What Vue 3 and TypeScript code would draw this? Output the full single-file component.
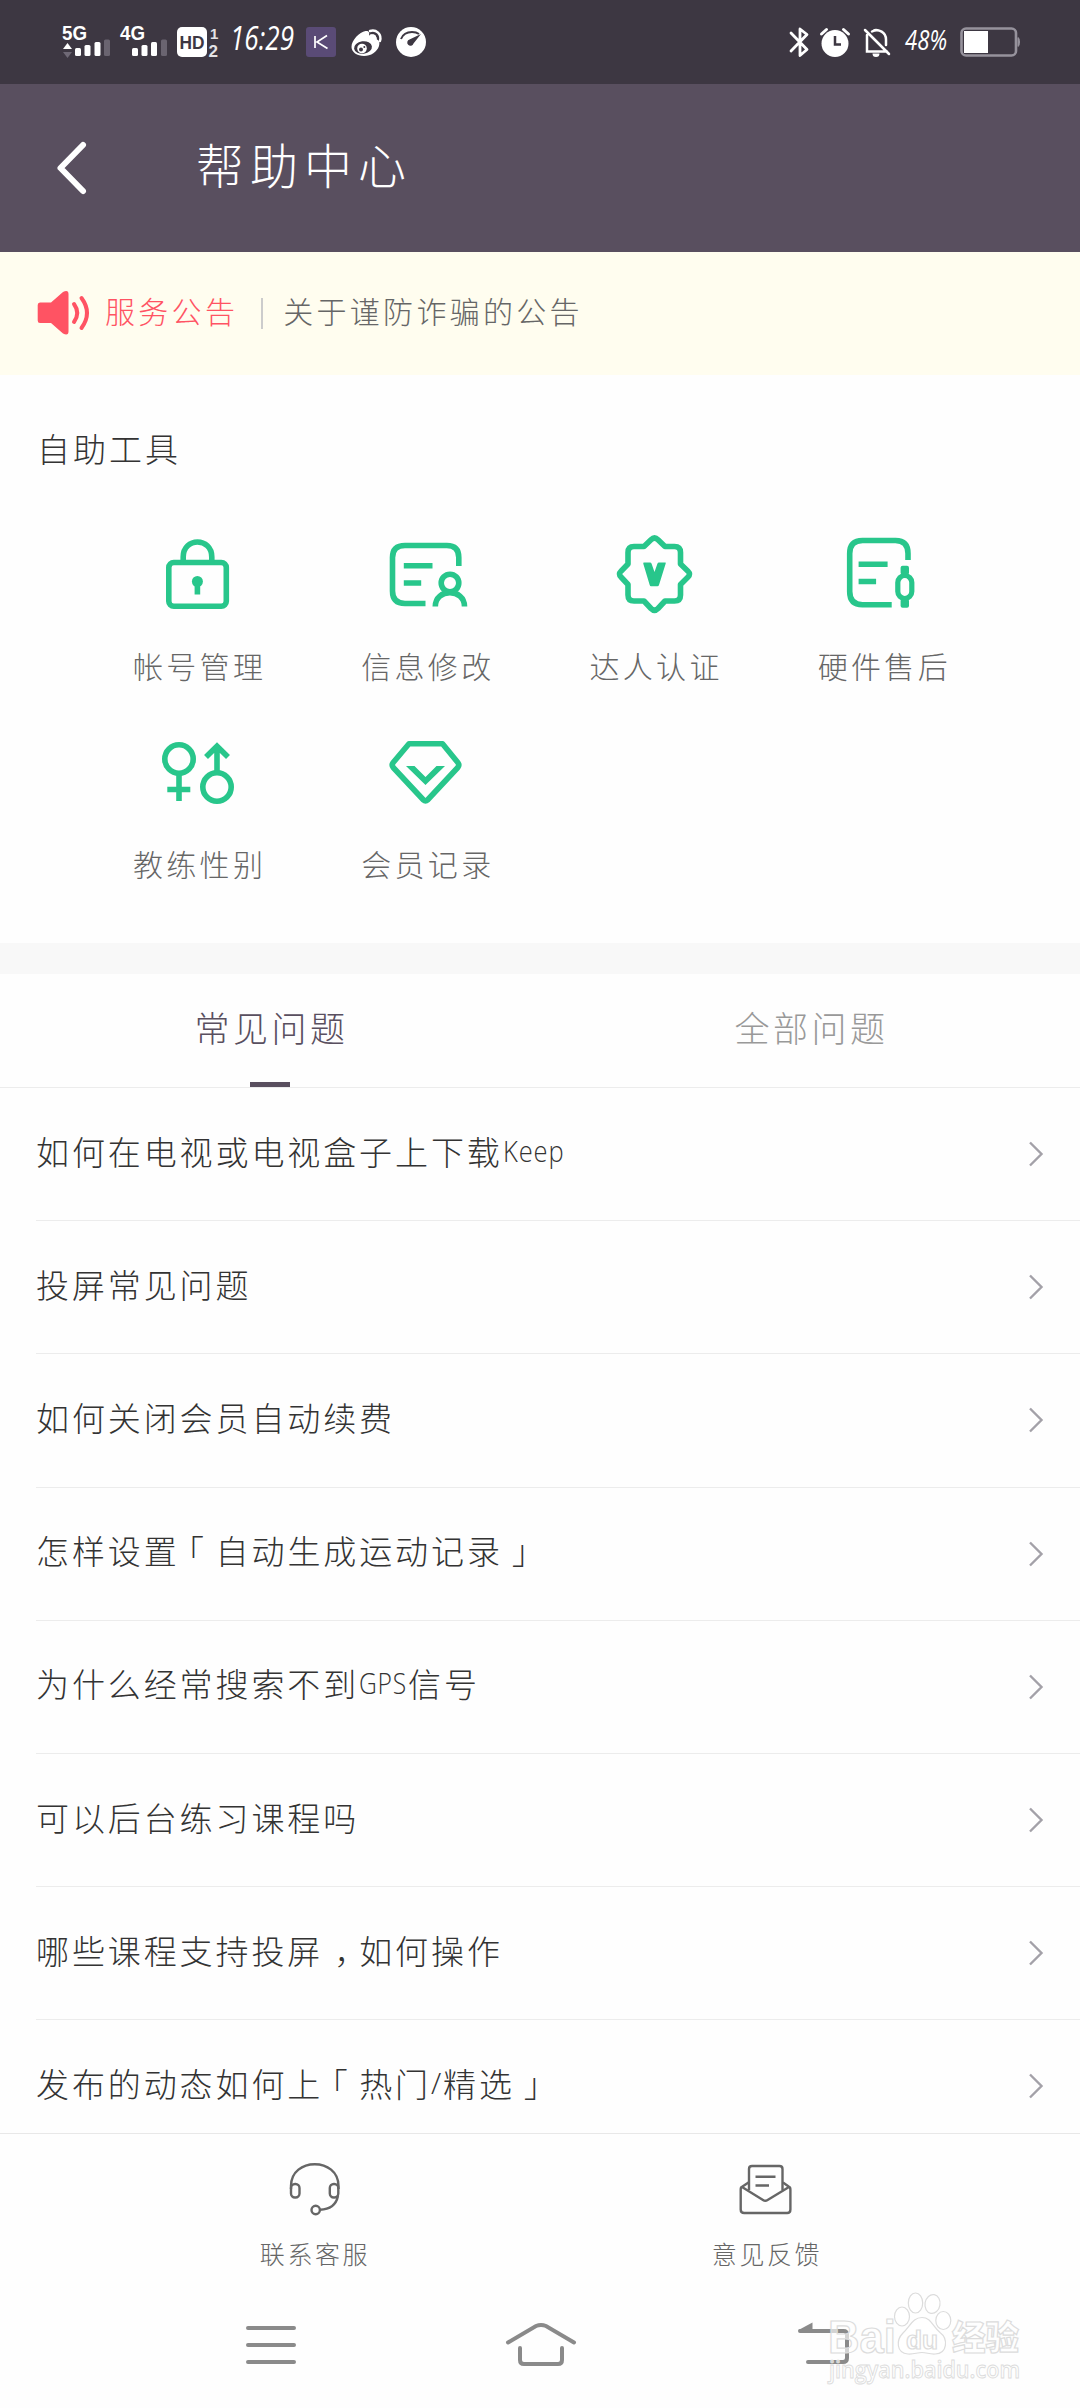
<script setup lang="ts">
interface Tool {
  name: string
  icon: string
  viewBox: string
}
interface Piece {
  text: string
  kind: 'cjk' | 'latin' | 'open' | 'close' | 'comma'
  box?: number
  scale?: number
}

const tools: Tool[] = [
  { name: '帐号管理', icon: 'lock', viewBox: '150 526 96 96' },
  { name: '信息修改', icon: 'info', viewBox: '378.5 526 96 96' },
  { name: '达人认证', icon: 'badge', viewBox: '606.5 526 96 96' },
  { name: '硬件售后', icon: 'device', viewBox: '835 526 96 96' },
  { name: '教练性别', icon: 'gender', viewBox: '150 724 96 96' },
  { name: '会员记录', icon: 'member', viewBox: '378.5 724 96 96' },
]

const tabs = ['常见问题', '全部问题']

const c = (text: string): Piece => ({ text, kind: 'cjk' })
const latin = (text: string, box: number, scale: number): Piece => ({ text, kind: 'latin', box, scale })
const open: Piece = { text: '「', kind: 'open' }
const close: Piece = { text: '」', kind: 'close' }
const comma: Piece = { text: '，', kind: 'comma' }

const questions: Piece[][] = [
  [c('如何在电视或电视盒子上下载'), latin('Keep', 64, 0.85)],
  [c('投屏常见问题')],
  [c('如何关闭会员自动续费')],
  [c('怎样设置'), open, c('自动生成运动记录'), close],
  [c('为什么经常搜索不到'), latin('GPS', 49, 0.82), c('信号')],
  [c('可以后台练习课程吗')],
  [c('哪些课程支持投屏'), comma, c('如何操作')],
  [c('发布的动态如何上'), open, c('热门'), latin('/', 12, 1), c('精选'), close],
]
</script>

<template>
  <div class="screen">
    <div class="status">
      <div class="group">
        <svg width="48" height="84" viewBox="63 0 48 84">
          <text x="62" y="40" class="net" textLength="25" lengthAdjust="spacingAndGlyphs">5G</text>
          <path d="M67.500 43l4.500 6h-9z" fill="#fff" />
          <path d="M63 52h9l-4.500 6z" fill="#6f6976" />
          <rect x="75" y="48" width="6" height="8" rx="1.500" fill="#fff" />
          <rect x="84.500" y="45" width="6" height="11" rx="1.500" fill="#fff" />
          <rect x="94.500" y="42" width="6" height="14" rx="1.500" fill="#fff" />
          <rect x="104" y="39.500" width="6" height="16.500" rx="1.500" fill="#6a6470" />
        </svg>
        <svg class="sim2" width="48" height="84" viewBox="120 0 48 84">
          <text x="120" y="40" class="net" textLength="25" lengthAdjust="spacingAndGlyphs">4G</text>
          <rect x="132" y="48" width="6" height="8" rx="1.500" fill="#fff" />
          <rect x="141.500" y="45" width="6" height="11" rx="1.500" fill="#fff" />
          <rect x="151" y="42" width="6" height="14" rx="1.500" fill="#fff" />
          <rect x="161" y="39.500" width="6" height="16.500" rx="1.500" fill="#6a6470" />
        </svg>
        <svg class="hd" width="43" height="84" viewBox="177 0 43 84">
          <rect x="177" y="27" width="30" height="30" rx="5" fill="#fff" />
          <text x="179.500" y="49" class="hdt" textLength="25" lengthAdjust="spacingAndGlyphs">HD</text>
          <text x="210" y="39" class="num">1</text>
          <text x="208.500" y="56.500" class="num big">2</text>
        </svg>
        <svg class="clock" width="66" height="84" viewBox="230 0 66 84">
          <text x="230" y="50" class="hand" font-size="33" textLength="64" lengthAdjust="spacingAndGlyphs">16:29</text>
        </svg>
        <svg class="keep" width="30" height="84" viewBox="306 0 30 84">
          <rect x="306" y="27" width="30" height="30" rx="3" fill="#5a4b76" />
          <path d="M315 36v12M327 35.500l-10 6.500 10.500 6.500" fill="none" stroke="#fff" stroke-width="1.700" />
        </svg>
        <svg class="weibo" width="31" height="84" viewBox="351 0 31 84">
          <path d="M351.500 47c0-7 8-15 14-16 4-.5 4 2 3.500 4.500 4-2 8-1 7 3.500 3 1 4 3 3 7-2 6-8 10-15 10-7 0-12.500-4-12.500-9z" fill="#fff" />
          <ellipse cx="363" cy="47.500" rx="9" ry="6.300" transform="rotate(-8 363 47.500)" fill="#3d3742" />
          <circle cx="362" cy="48.500" r="4.800" fill="#fff" />
          <circle cx="361" cy="49.500" r="2" fill="#3d3742" />
          <circle cx="364.300" cy="47" r="1" fill="#3d3742" />
          <path d="M370 31c6-2 12 3 10 10M371 35.500c3-.5 5 1.500 4.500 4.500" fill="none" stroke="#fff" stroke-width="2.400" stroke-linecap="round" />
        </svg>
        <svg class="gauge" width="30" height="84" viewBox="396 0 30 84">
          <circle cx="411" cy="42" r="15" fill="#fff" />
          <path d="M401 39c2-5 6-7 11-7 3 0 5 .5 7 2" fill="none" stroke="#3d3742" stroke-width="2" />
          <path d="M421 34l-7.500 9.500a3.200 3.200 0 1 1-4-4z" fill="#3d3742" />
        </svg>
      </div>
      <div class="group">
        <svg width="20" height="84" viewBox="789 0 20 84">
          <path d="M791 33l16 16.500-7 6V29l7 5.500L791 51" fill="none" stroke="#fff" stroke-width="2.800" stroke-linejoin="round" stroke-linecap="round" />
        </svg>
        <svg class="alarm" width="30" height="84" viewBox="820 0 30 84">
          <circle cx="835" cy="43.500" r="13.500" fill="#fff" />
          <path d="M821.500 34l5-4.500M848.500 34l-5-4.500" stroke="#fff" stroke-width="3" stroke-linecap="round" />
          <path d="M835 36v8.500h6" fill="none" stroke="#3d3742" stroke-width="2.500" />
        </svg>
        <svg class="bell" width="27" height="84" viewBox="864 0 27 84">
          <path d="M867 35v16.500h20M872 31.500c7-3.500 14 1 14 8v5.500M865 30l24 24" fill="none" stroke="#fff" stroke-width="2.500" stroke-linecap="round" />
          <path d="M872.500 53.500h7a3.500 3.500 0 0 1-7 0zM873 30a3.500 2.500 0 0 1 6 0z" fill="#fff" />
        </svg>
        <svg class="pct" width="45" height="84" viewBox="904 0 45 84">
          <text x="905" y="50" class="hand" font-size="27" textLength="42" lengthAdjust="spacingAndGlyphs">48%</text>
        </svg>
        <svg class="battery" width="61" height="84" viewBox="960 0 61 84">
          <rect x="961.500" y="28.500" width="54.500" height="27" rx="4.500" fill="none" stroke="#96929c" stroke-width="2.600" />
          <rect x="964" y="31" width="24" height="22" fill="#fff" />
          <path d="M1018 37.500c2 1 2 8 0 9z" fill="#96929c" stroke="#96929c" />
        </svg>
      </div>
    </div>

    <header class="header">
      <svg width="32" height="56" viewBox="56 140 32 56">
        <path d="M83 145L60.500 168 83 191" fill="none" stroke="#fff" stroke-width="6" stroke-linecap="round" stroke-linejoin="round" />
      </svg>
      <h1>帮助中心</h1>
    </header>

    <section class="notice">
      <svg width="54" height="46" viewBox="37 290 54 46">
        <path d="M40 302.500h11l12-10.500q5.500-2.500 5.500 2v37.500q0 4.500-5.500 2l-12-10.500H40q-2.300 0-2.300-2.500V305q0-2.500 2.300-2.500z" fill="#ff5363" />
        <path d="M74 304q6.500 9 0 18M81.500 298q11 15 0 30" fill="none" stroke="#ff5363" stroke-width="4" stroke-linecap="round" />
      </svg>
      <span class="ntag">服务公告</span>
      <i></i>
      <span class="ntext">关于谨防诈骗的公告</span>
    </section>

    <section class="tools">
      <h2>自助工具</h2>
      <div class="grid">
        <div v-for="t in tools" :key="t.name" class="tool">
          <svg width="96" height="96" :viewBox="t.viewBox" fill="none" stroke="#28c68b" stroke-width="5.600">
            <g v-if="t.icon === 'lock'">
              <rect x="168.800" y="562.500" width="57.500" height="43.700" rx="5" />
              <path d="M183.200 565v-8c0-20 28.600-20 28.600 0v8" />
              <circle cx="197.400" cy="581.500" r="5.500" fill="#28c68b" stroke="none" />
              <path d="M197.400 583v11.500" />
            </g>
            <g v-else-if="t.icon === 'info'">
              <path d="M459.300 566v-8.500q0-12-12-12H405.500q-12.500 0-12.500 12V591q0 12.500 12.500 12.500H426M404.300 565.800H433M404.300 583H421.700" />
              <circle cx="450.500" cy="583" r="8.800" />
              <path d="M435.800 606.500c0-18.500 29.200-18.500 29.200 0" />
            </g>
            <g v-else-if="t.icon === 'badge'">
              <path d="M650.500 539.800q3.500-3.500 7 0L664.500 546.500H674q6 0 6 6V564l7.500 7.200q3 2.900 0 5.800L680 584.500V595q0 6-6 6H664.500l-7 7.500q-3.500 3.500-7 0L643.500 601H633.500q-6 0-6-6V584.500l-7-7.500q-3-2.900 0-5.800l7-7.200V552.500q0-6 6-6h10z" stroke-linejoin="round" />
              <path d="M643.500 562.500h6q1.200 0 1.600 1.200l2.900 8.300 2.900-8.300q.4-1.200 1.600-1.200h6.300q.8 0 .4 1L658.500 585q-.5 1.200-1.500 1.200h-6.500q-1 0-1.300-1.200L642.800 563.800q-.3-1.300.7-1.300z" fill="#28c68b" stroke="none" />
            </g>
            <g v-else-if="t.icon === 'device'">
              <path d="M908 560v-6.500q0-13-12.500-13H862.500q-12.800 0-12.800 13V591.500q0 13.300 12.800 13.300H891.700M858.600 564.300h29M858.600 581.500h17.500" />
              <rect x="897.800" y="575.500" width="14" height="23" rx="7" stroke-width="5.200" />
              <rect x="900.600" y="565.700" width="8.400" height="9" rx="2" fill="#28c68b" stroke="none" />
              <rect x="900.600" y="598.800" width="8.400" height="9" rx="2" fill="#28c68b" stroke="none" />
            </g>
            <g v-else-if="t.icon === 'gender'">
              <circle cx="179" cy="759" r="14.200" />
              <path d="M179 773v28M167.300 789.500h23" />
              <circle cx="217" cy="787" r="14.200" />
              <path d="M217 773v-27M206 757l11-10.800L228 757" />
            </g>
            <g v-else>
              <path d="M409.500 743.700h33.500L458.300 762.500q2 2.500 0 5L428 800q-2 2-4 0L393.700 767.500q-2-2.500 0-5z" stroke-linejoin="round" />
              <path d="M406.500 766h8.500l11 11 11-11h8.500l-19.500 19z" fill="#28c68b" stroke="none" />
            </g>
          </svg>
          <span>{{ t.name }}</span>
        </div>
      </div>
    </section>

    <nav class="tabs">
      <div v-for="(t, i) in tabs" :key="t" class="tab" :class="{ active: i === 0 }">
        <span>{{ t }}</span>
        <b v-if="i === 0"></b>
      </div>
    </nav>

    <ul class="list">
      <li v-for="(q, i) in questions" :key="i">
        <p>
          <template v-for="(p, j) in q" :key="j"><span v-if="p.kind === 'latin'" class="latin" :style="{ width: p.box + 'px' }"><span :style="{ transform: `scaleX(${p.scale})` }">{{ p.text }}</span></span><span v-else :class="p.kind">{{ p.text }}</span></template>
        </p>
        <svg width="16" height="28" viewBox="0 0 16 28">
          <path d="M2 2.500L13.500 14 2 25.500" fill="none" stroke="#a3a1a8" stroke-width="2.400" />
        </svg>
      </li>
    </ul>

    <footer class="footer">
      <div class="action">
        <svg width="60" height="60" viewBox="284 2159 60 60" fill="none" stroke="#666" stroke-width="2.400">
          <path d="M291 2189v-3c0-29 47.500-29 47.500 0v3M338 2196c-2 9-8 13.500-18 13.700" />
          <rect x="291" y="2184" width="8.500" height="13.500" rx="4" />
          <rect x="329.800" y="2184" width="8.500" height="13.500" rx="4" />
          <circle cx="315.700" cy="2210" r="4.200" />
        </svg>
        <span>联系客服</span>
      </div>
      <div class="action">
        <svg width="60" height="60" viewBox="736 2159 60 60" fill="none" stroke="#666" stroke-width="2.400" stroke-linejoin="round">
          <path d="M749 2190v-21q0-3 3-3h27.500q3 0 3 3v21M755.500 2176.700H775.500M755.500 2185.500h13.500" />
          <path d="M748.500 2182.500l-7.500 5q-.3 1-.3 2.500v19.500q0 3.500 3.500 3.500h43q3.200 0 3.200-3.500V2190q0-1.500-.4-2.500l-7-5M742 2187l21 13q2.300 1.500 4.600 0l21.400-13" />
        </svg>
        <span>意见反馈</span>
      </div>
    </footer>

    <div class="sysnav">
      <svg width="52" height="48" viewBox="245 2321 52 48">
        <path d="M248 2328h46M248 2345h46M248 2362h46" stroke="#8a8a8a" stroke-width="4" stroke-linecap="round" />
      </svg>
      <svg class="home" width="74" height="48" viewBox="504 2321 74 48">
        <path d="M508 2342.500l28-16.500q5-2 10 0l28 16.500M520 2348v12q0 4 4 4h34q4 0 4-4v-12" fill="none" stroke="#8a8a8a" stroke-width="4" stroke-linecap="round" />
      </svg>
      <svg class="back" width="54" height="48" viewBox="797 2321 54 48">
        <path d="M800 2331h43.500q3.500 0 3.500 3.500V2358q0 4-4 4H808" fill="none" stroke="#8a8a8a" stroke-width="4" stroke-linecap="round" />
        <path d="M798.500 2330l14-7.500v9h-13z" fill="#8a8a8a" />
      </svg>
      <svg class="mark" width="250" height="108" viewBox="820 2286 250 108" fill="#fff" fill-opacity=".65" stroke="#dcdcdc" stroke-width="1.200">
        <ellipse cx="902" cy="2316.500" rx="7.500" ry="9.500" />
        <ellipse cx="915.500" cy="2303" rx="7.200" ry="10" />
        <ellipse cx="932.500" cy="2304" rx="7.500" ry="9.500" transform="rotate(10 932.500 2304)" />
        <ellipse cx="943.300" cy="2320.500" rx="7.500" ry="9" />
        <path d="M922 2317.500c9 0 10 8 18 15 8 6 8 21-5 21.500-6 .3-8-1.500-13-1.500s-8 2-14 1.500c-12-1-12-14-5-21 8-8 10-15.500 19-15.500z" />
        <text x="828" y="2353" class="bd" font-size="46" textLength="68" lengthAdjust="spacingAndGlyphs">Bai</text>
        <text x="906" y="2349" class="bd" font-size="25" textLength="32" lengthAdjust="spacingAndGlyphs">du</text>
        <text x="952" y="2350" class="bd cn" font-size="34" textLength="67" lengthAdjust="spacingAndGlyphs">经验</text>
        <text x="829" y="2378" class="bd url" font-size="23" textLength="191" lengthAdjust="spacingAndGlyphs">jingyan.baidu.com</text>
      </svg>
    </div>
  </div>
</template>

<style>
body {
  background: #fefefe;
}
</style>

<style scoped>
.screen {
  width: 1080px;
  height: 2408px;
  overflow: hidden;
  display: flex;
  flex-direction: column;
  background: #fefefe;
  color: #333;
  font-family: "Noto Sans CJK SC", "Liberation Sans", sans-serif;
  font-weight: 300;
  white-space: nowrap;
}
svg {
  display: block;
  flex: none;
  overflow: visible;
}
h1, h2, p, ul {
  margin: 0;
  padding: 0;
  font-weight: 300;
}
.status {
  height: 84px;
  flex: none;
  background: #3d3742;
  display: flex;
  justify-content: space-between;
  padding: 0 59px 0 63px;
}
.group {
  display: flex;
}
.sim2, .hd {
  margin-left: 9px;
}
.clock, .keep {
  margin-left: 10px;
}
.weibo {
  margin-left: 15px;
}
.gauge {
  margin-left: 14px;
}
.alarm {
  margin-left: 11px;
}
.bell {
  margin-left: 14px;
}
.pct {
  margin-left: 13px;
}
.battery {
  margin-left: 11px;
}
.net {
  font: bold 21px "Liberation Sans", sans-serif;
  fill: #fff;
}
.hdt {
  font: bold 19px "Liberation Sans", sans-serif;
  fill: #3d3742;
}
.num {
  font: bold 15px "Liberation Sans", sans-serif;
  fill: #e4e3e6;
}
.num.big {
  font-size: 17px;
}
.hand {
  font-family: "Open Sans", sans-serif;
  font-weight: 400;
  font-style: italic;
  fill: #fff;
}
.header {
  height: 168px;
  flex: none;
  background: #594f5f;
  display: flex;
  align-items: center;
  padding-left: 56px;
}
.header h1 {
  margin-left: 108px;
  padding-bottom: 10px;
  font-size: 48px;
  line-height: 60px;
  letter-spacing: 6px;
  color: #fff;
}
.notice {
  height: 123px;
  flex: none;
  background: #fffdef;
  display: flex;
  align-items: center;
  padding-left: 37px;
}
.notice svg {
  margin-bottom: 2px;
}
.notice span {
  font-size: 30px;
  line-height: 40px;
  letter-spacing: 3.300px;
  padding-bottom: 8px;
}
.ntag {
  margin-left: 14px;
  color: #ff5363;
}
.notice i {
  width: 2px;
  height: 31px;
  background: #ccc;
  margin: 0 20px 0 23px;
}
.ntext {
  color: #666;
}
.tools {
  height: 568px;
  flex: none;
  border-bottom: 31px solid #f8f8f8;
}
.tools h2 {
  padding: 51px 0 0 37px;
  font-size: 33px;
  line-height: 44px;
  letter-spacing: 3px;
}
.grid {
  margin: 56px 83px 0 84px;
  display: grid;
  grid-template-columns: repeat(4, 1fr);
  grid-auto-rows: 198px;
}
.tool {
  display: flex;
  flex-direction: column;
  align-items: center;
}
.tool span {
  margin-top: 22px;
  padding-left: 3px;
  font-size: 30px;
  line-height: 42px;
  letter-spacing: 3.300px;
  color: #666;
}
.tabs {
  height: 113px;
  flex: none;
  display: flex;
  border-bottom: 1px solid #ececec;
}
.tab {
  flex: 1;
  display: flex;
  flex-direction: column;
  align-items: center;
  justify-content: space-between;
  color: #999;
}
.tab span {
  padding: 28px 0 0 3px;
  font-size: 35px;
  line-height: 50px;
  letter-spacing: 3.500px;
}
.tab.active {
  color: #594f5f;
}
.tab b {
  width: 40px;
  height: 5px;
  background: #594f5f;
}
.list {
  height: 1045px;
  flex: none;
  overflow: hidden;
  list-style: none;
}
.list li {
  height: 133.200px;
  box-sizing: border-box;
  margin-left: 36px;
  padding-right: 36px;
  border-bottom: 1px solid #ececec;
  display: flex;
  align-items: center;
  justify-content: space-between;
}
.list p {
  display: flex;
  padding-bottom: 7px;
  font-size: 33px;
  line-height: 48px;
  letter-spacing: 2.900px;
}
.latin {
  font-family: "Open Sans", "Liberation Sans", sans-serif;
  font-size: 30px;
  letter-spacing: 1px;
}
.latin span {
  display: inline-block;
  transform-origin: left;
}
.open, .close, .comma {
  width: 36px;
  box-sizing: border-box;
  font-feature-settings: "halt";
}
.open {
  padding-left: 8px;
}
.close {
  padding-left: 9px;
}
.comma {
  padding-left: 11px;
}
.footer {
  height: 152px;
  flex: none;
  border-top: 1px solid #e8e8e8;
  display: grid;
  grid-template-columns: 452px 452px;
  justify-content: center;
}
.action {
  display: flex;
  flex-direction: column;
  align-items: center;
  padding-top: 25px;
}
.action span {
  margin-top: 16px;
  padding-left: 2px;
  font-size: 25px;
  line-height: 36px;
  letter-spacing: 2.600px;
  color: #666;
}
.sysnav {
  position: relative;
  flex: 1;
  display: flex;
  padding: 35px 0 0 245px;
}
.home {
  margin-left: 207px;
}
.back {
  margin-left: 219px;
}
.mark {
  position: absolute;
  left: 820px;
  top: 0;
}
.bd {
  font-family: "Liberation Sans", sans-serif;
  font-weight: bold;
}
.bd.cn {
  font-family: "Noto Sans CJK SC", sans-serif;
  font-weight: 900;
}
.bd.url {
  font-family: "Open Sans", sans-serif;
  font-weight: 600;
  stroke-width: 0.900px;
}
</style>
